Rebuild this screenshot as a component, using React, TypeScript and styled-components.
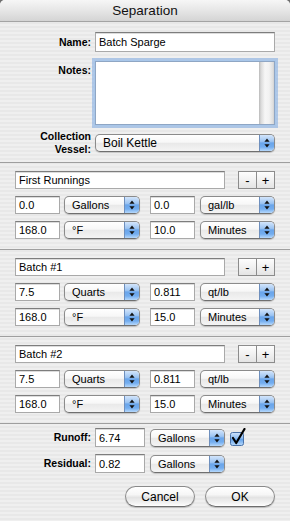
import React from 'react';
import styled, { createGlobalStyle } from 'styled-components';

const GlobalStyle = createGlobalStyle`
  html, body { margin: 0; padding: 0; background: #6e6e6e; }
  body { font-family: "Liberation Sans", Arial, sans-serif; color: #000; }
  * { box-sizing: border-box; }
`;

const Window = styled.div`
  width: 290px;
  height: 521px;
  display: flex;
  flex-direction: column;
  border-radius: 5px 5px 0 0;
  overflow: hidden;
  background: repeating-linear-gradient(180deg, #efefef 0px, #efefef 2px, #e8e8e8 2px, #e8e8e8 4px);
`;

const TitleBar = styled.div`
  height: 22px;
  flex: none;
  display: flex;
  align-items: center;
  justify-content: center;
  font-size: 13.5px;
  color: #111;
  border-bottom: 1px solid #a4a4a4;
  background: linear-gradient(180deg, #f6f6f6 0%, #e6e6e6 50%, #d4d4d4 100%);
`;

const Block = styled.div<{ $top?: number; $bottom?: number }>`
  display: flex;
  flex-direction: column;
  padding: ${(p) => p.$top ?? 0}px 15px ${(p) => p.$bottom ?? 0}px;
`;

const FormRow = styled.div<{ $mt?: number; $align?: string }>`
  display: grid;
  grid-template-columns: 76px 1fr;
  column-gap: 4px;
  align-items: ${(p) => p.$align ?? 'center'};
  margin-top: ${(p) => p.$mt ?? 0}px;
`;

const Label = styled.label<{ $mt?: number }>`
  font-weight: bold;
  font-size: 10.5px;
  line-height: 13px;
  text-align: right;
  margin-top: ${(p) => p.$mt ?? 0}px;
`;

const TextField = styled.div<{ $h?: number; $w?: number }>`
  height: ${(p) => p.$h ?? 18}px;
  width: ${(p) => (p.$w ? `${p.$w}px` : '100%')};
  background: #fff;
  border: 1px solid #a9a9a9;
  border-top-color: #7d7d7d;
  box-shadow: inset 0 1px 0 #dcdcdc;
  font-size: 11px;
  padding: 0 3px;
  display: flex;
  align-items: center;
  white-space: nowrap;
  overflow: hidden;
`;

const NotesBox = styled.div`
  margin: 3px 0;
  height: 64px;
  background: #fff;
  border: 1px solid #8fa6c4;
  box-shadow: 0 0 0 1px #a9c7ea, 0 0 0 3px rgba(125, 170, 225, 0.55);
  display: flex;
  justify-content: flex-end;
`;

const ScrollTrack = styled.div`
  width: 15px;
  background: linear-gradient(90deg, #b9b9b9 0px, #dadada 2px, #f6f6f6 6px, #f2f2f2 10px, #dedede 14px, #d0d0d0 15px);
`;

const Popup = styled.div<{ $h?: number; $fs?: number; $w?: number }>`
  height: ${(p) => p.$h ?? 18}px;
  width: ${(p) => (p.$w ? `${p.$w}px` : '100%')};
  display: flex;
  align-items: stretch;
  border: 1px solid #8b8b8b;
  border-bottom-color: #6f6f6f;
  border-radius: 5px;
  overflow: hidden;
  box-shadow: 0 1px 1px rgba(0, 0, 0, 0.18);
  background: linear-gradient(180deg, #ffffff 0%, #f7f7f7 45%, #e9e9e9 52%, #f4f4f4 100%);
  font-size: ${(p) => p.$fs ?? 11}px;
`;

const PopupText = styled.span`
  flex: 1;
  display: flex;
  align-items: center;
  padding-left: 7px;
  white-space: nowrap;
  overflow: hidden;
`;

const PopupArrows = styled.span`
  width: 15px;
  flex: none;
  display: flex;
  align-items: center;
  justify-content: center;
  border-left: 1px solid #6e8fbd;
  background: linear-gradient(180deg, #d3e5fb 0%, #9cc4f2 40%, #6aa5ea 50%, #73adef 75%, #b6d8fb 100%);
`;

const Arrows = () => (
  <svg width="6" height="10" viewBox="0 0 6 10">
    <path d="M3 0.5 L5.6 3.8 L0.4 3.8 Z" fill="#111" />
    <path d="M3 9.5 L5.6 6.2 L0.4 6.2 Z" fill="#111" />
  </svg>
);

const PopupButton = ({ value, h, fs, w }: { value: string; h?: number; fs?: number; w?: number }) => (
  <Popup $h={h} $fs={fs} $w={w}>
    <PopupText>{value}</PopupText>
    <PopupArrows>
      <Arrows />
    </PopupArrows>
  </Popup>
);

const Separator = styled.div`
  height: 1px;
  flex: none;
  background: #9f9f9f;
`;

const SectionBody = styled.div`
  display: flex;
  flex-direction: column;
  gap: 7px;
  padding: 8px 15px 10px;
`;

const NameLine = styled.div`
  display: grid;
  grid-template-columns: 1fr 37px;
  column-gap: 13px;
  align-items: center;
`;

const ValueLine = styled.div`
  display: grid;
  grid-template-columns: 45px 80px 55px 80px;
  justify-items: end;
  align-items: center;
`;

const Stepper = styled.div`
  height: 18px;
  display: flex;
  border: 1px solid #8c8c8c;
  background: linear-gradient(180deg, #fdfdfd 0%, #f1f1f1 50%, #e4e4e4 100%);
`;

const StepButton = styled.span<{ $divider?: boolean }>`
  flex: 1;
  display: flex;
  align-items: center;
  justify-content: center;
  font-size: 13px;
  line-height: 1;
  border-left: ${(p) => (p.$divider ? '1px solid #8c8c8c' : 'none')};
`;

const TotalsRow = styled.div<{ $mt?: number }>`
  display: grid;
  grid-template-columns: 76px 54px 80px 21px;
  justify-items: end;
  align-items: center;
  margin-top: ${(p) => p.$mt ?? 0}px;
  & > label { justify-self: stretch; }
`;

const ButtonRow = styled.div`
  display: flex;
  justify-content: flex-end;
  gap: 10px;
  margin-top: 13px;
`;

const PushButton = styled.button`
  width: 70px;
  height: 21px;
  border-radius: 11px;
  border: 1px solid #8a8a8a;
  border-bottom-color: #6d6d6d;
  background: linear-gradient(180deg, #ffffff 0%, #f6f6f6 40%, #e3e3e3 55%, #f3f3f3 85%, #ffffff 100%);
  box-shadow: 0 1px 1px rgba(0, 0, 0, 0.2);
  font-family: "Liberation Sans", Arial, sans-serif;
  font-size: 12px;
  color: #000;
  padding: 0;
`;

const Checkbox = () => (
  <svg width="16" height="19" viewBox="0 0 16 19">
    <defs>
      <linearGradient id="cb" x1="0" y1="0" x2="0" y2="1">
        <stop offset="0" stopColor="#cfe3fb" />
        <stop offset="0.45" stopColor="#8dbcf1" />
        <stop offset="0.5" stopColor="#5f9fe9" />
        <stop offset="1" stopColor="#b9dafb" />
      </linearGradient>
    </defs>
    <rect x="0.5" y="4.5" width="13" height="13" rx="2" fill="url(#cb)" stroke="#4a72a8" />
    <path d="M3 10 L6.2 15 L14.5 1" fill="none" stroke="#000" strokeWidth="2.2" strokeLinecap="round" strokeLinejoin="round" />
  </svg>
);

type SectionData = {
  name: string;
  vol: string;
  volUnit: string;
  ratio: string;
  ratioUnit: string;
  temp: string;
  tempUnit: string;
  time: string;
  timeUnit: string;
};

const sections: SectionData[] = [
  { name: 'First Runnings', vol: '0.0', volUnit: 'Gallons', ratio: '0.0', ratioUnit: 'gal/lb', temp: '168.0', tempUnit: '°F', time: '10.0', timeUnit: 'Minutes' },
  { name: 'Batch #1', vol: '7.5', volUnit: 'Quarts', ratio: '0.811', ratioUnit: 'qt/lb', temp: '168.0', tempUnit: '°F', time: '15.0', timeUnit: 'Minutes' },
  { name: 'Batch #2', vol: '7.5', volUnit: 'Quarts', ratio: '0.811', ratioUnit: 'qt/lb', temp: '168.0', tempUnit: '°F', time: '15.0', timeUnit: 'Minutes' },
];

const Section = ({ s }: { s: SectionData }) => (
  <>
    <Separator />
    <SectionBody>
      <NameLine>
        <TextField>{s.name}</TextField>
        <Stepper>
          <StepButton>-</StepButton>
          <StepButton $divider>+</StepButton>
        </Stepper>
      </NameLine>
      <ValueLine>
        <TextField $w={45}>{s.vol}</TextField>
        <PopupButton value={s.volUnit} w={76} />
        <TextField $w={45}>{s.ratio}</TextField>
        <PopupButton value={s.ratioUnit} w={75} />
      </ValueLine>
      <ValueLine>
        <TextField $w={45}>{s.temp}</TextField>
        <PopupButton value={s.tempUnit} w={76} />
        <TextField $w={45}>{s.time}</TextField>
        <PopupButton value={s.timeUnit} w={75} />
      </ValueLine>
    </SectionBody>
  </>
);

export default function App() {
  return (
    <>
      <GlobalStyle />
      <Window>
        <TitleBar>Separation</TitleBar>
        <Block $top={10} $bottom={6}>
          <FormRow>
            <Label>Name:</Label>
            <TextField $h={20}>Batch Sparge</TextField>
          </FormRow>
          <FormRow $mt={6} $align="start">
            <Label $mt={6}>Notes:</Label>
            <NotesBox>
              <ScrollTrack />
            </NotesBox>
          </FormRow>
          <FormRow $mt={2}>
            <Label>
              Collection
              <br />
              Vessel:
            </Label>
            <PopupButton value="Boil Kettle" h={18} fs={12} />
          </FormRow>
        </Block>
        {sections.map((s) => (
          <Section key={s.name} s={s} />
        ))}
        <Separator />
        <Block $top={4}>
          <TotalsRow>
            <Label>Runoff:</Label>
            <TextField $h={19} $w={50}>6.74</TextField>
            <PopupButton value="Gallons" w={75} />
            <Checkbox />
          </TotalsRow>
          <TotalsRow $mt={7}>
            <Label>Residual:</Label>
            <TextField $h={19} $w={50}>0.82</TextField>
            <PopupButton value="Gallons" w={75} />
          </TotalsRow>
          <ButtonRow>
            <PushButton>Cancel</PushButton>
            <PushButton>OK</PushButton>
          </ButtonRow>
        </Block>
      </Window>
    </>
  );
}
